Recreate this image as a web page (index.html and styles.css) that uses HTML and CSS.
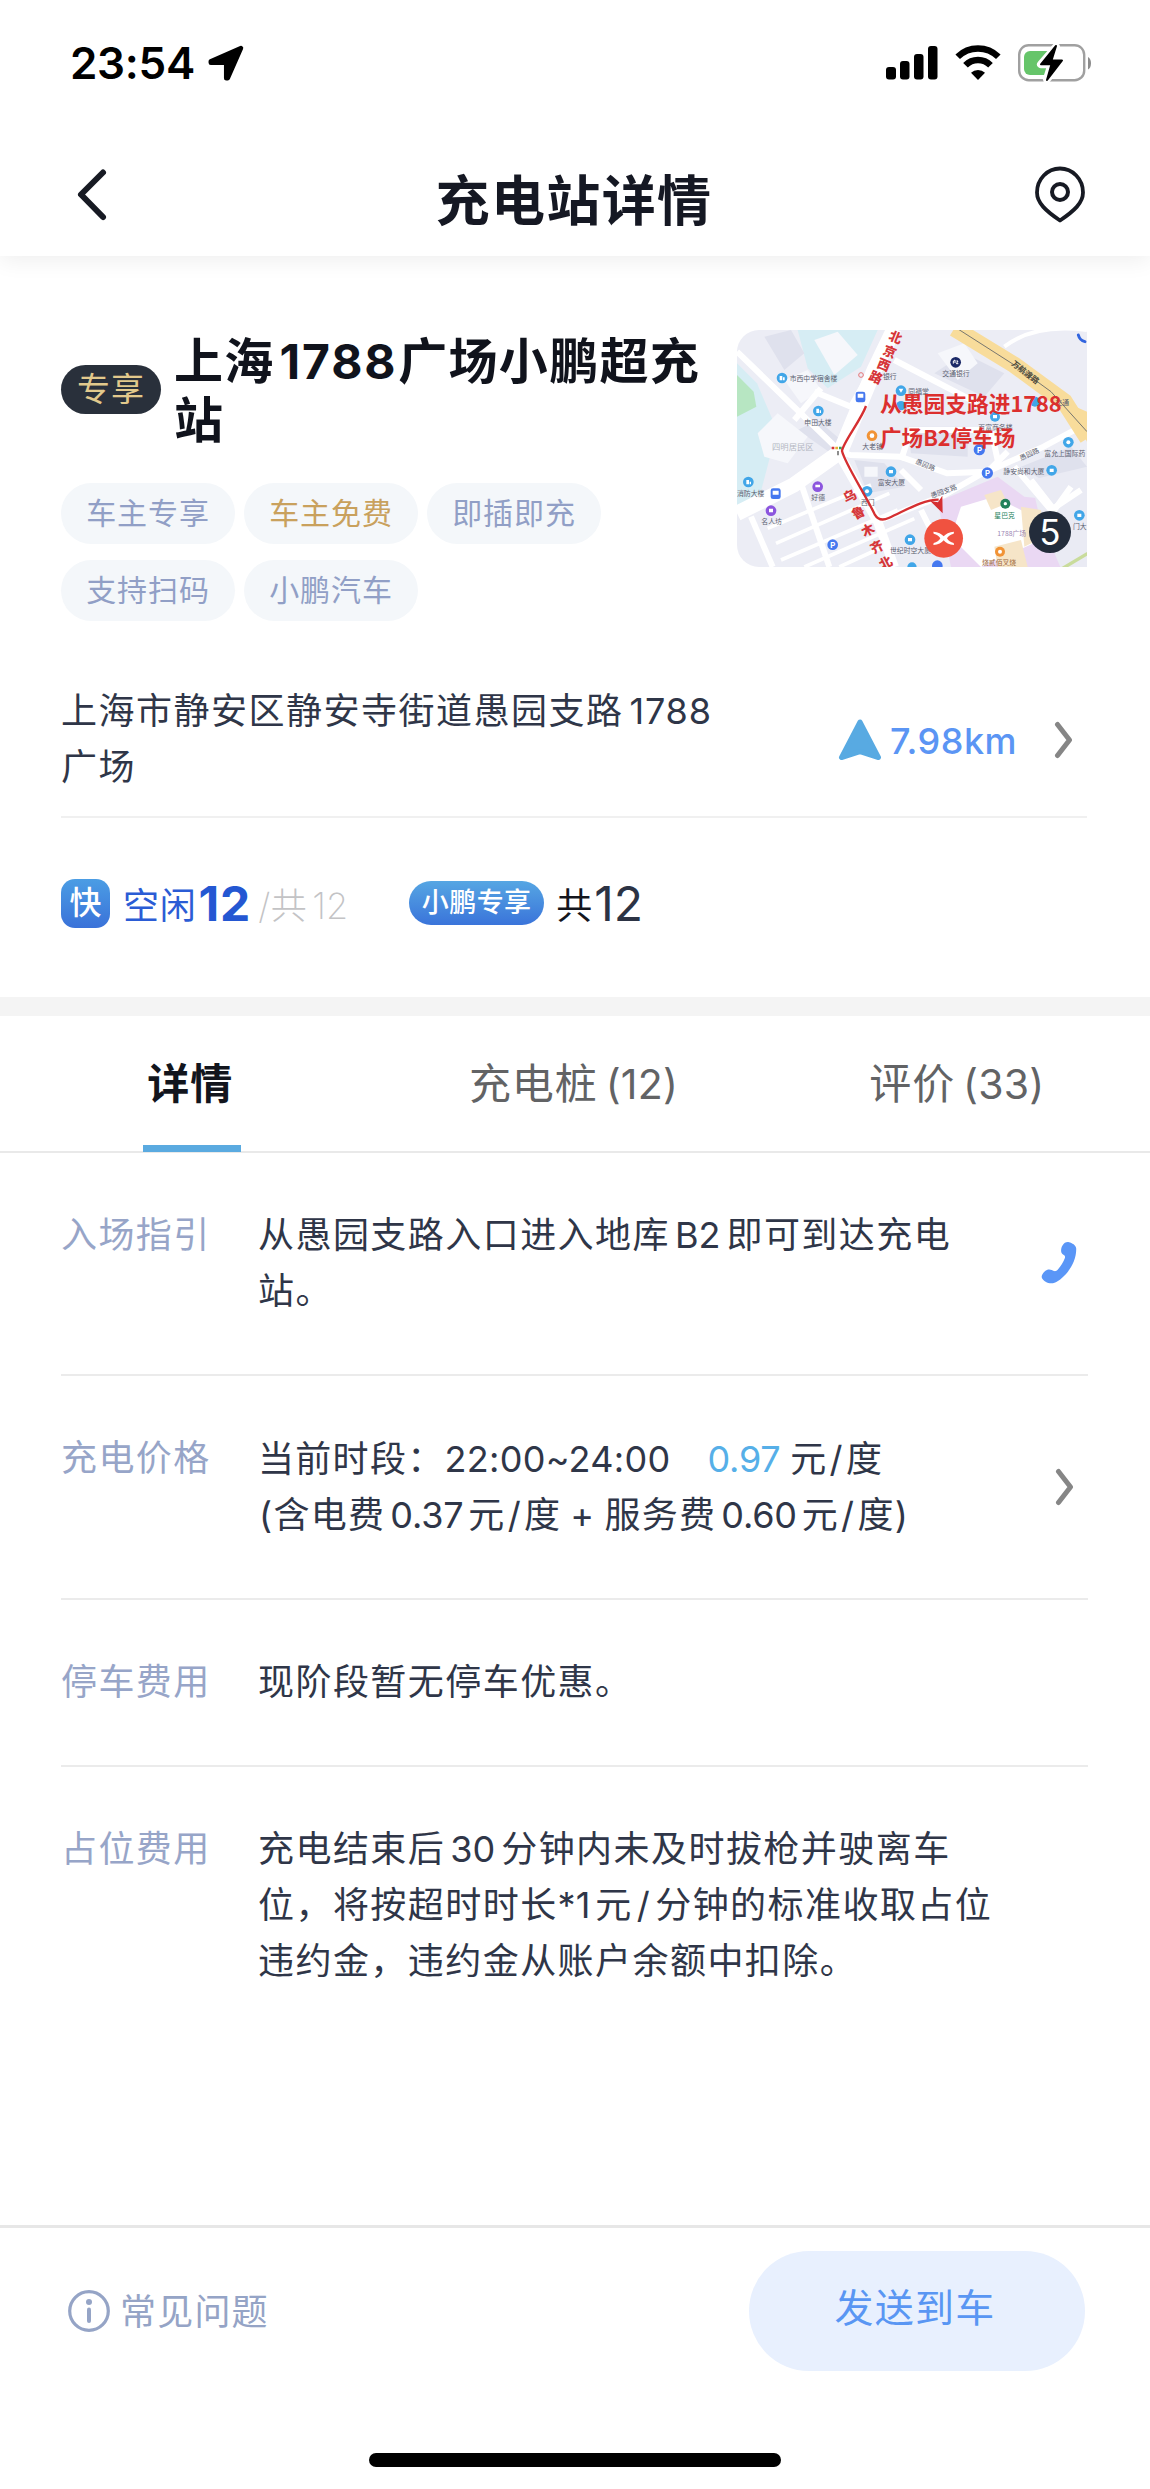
FILE: index.html
```html
<!DOCTYPE html>
<html lang="zh-CN">
<head>
<meta charset="utf-8">
<title>充电站详情</title>
<link rel="stylesheet" href="styles.css">
</head>
<body>
<div class="app">
  <header class="top">
    <div class="status">
      <div class="status-left">
        <span class="clock">23:54</span>
        <svg class="loc" width="36" height="36" viewBox="0 0 36 36"><path d="M33 3 2.800 16.200v1.600h15.400v15.400h1.600z" fill="#000" stroke="#000" stroke-width="4.500" stroke-linejoin="round"/></svg>
      </div>
      <div class="status-right">
        <svg width="52" height="34" viewBox="0 0 52 34"><rect x="0" y="21" width="10" height="12.500" rx="3"/><rect x="14" y="15" width="9.500" height="18.500" rx="3"/><rect x="28" y="8" width="9.500" height="25.500" rx="3"/><rect x="42" y="0" width="9.500" height="33.500" rx="3"/></svg>
        <svg class="wifi" width="46" height="36" viewBox="0 0 46 36"><g fill="none" stroke="#000" stroke-width="6.500"><path d="M2.700 11.800a29 29 0 0 1 40.600 0"/><path d="M10.500 20.200a17.500 17.500 0 0 1 25 0"/></g><path d="M23 35l-7-7.200a10 10 0 0 1 14 0z"/></svg>
        <svg class="battery" width="76" height="40" viewBox="0 0 76 40"><rect x="1.200" y="2.200" width="65" height="35" rx="9.500" fill="#fff" stroke="#a0a0a0" stroke-width="2.400"/><path d="M70 14c4 1.500 4 11 0 12.500z" fill="#8c8c8c"/><path d="M12 8h20v24H12a6 6 0 0 1-6-6V14a6 6 0 0 1 6-6z" fill="#66c56a"/><path d="M38 4 23 21.300h10.500L29 36 44 18.500H33.500z" fill="#000" stroke="#fff" stroke-width="8" stroke-linejoin="round"/><path d="M38 3 23 21.300h10.500L29 37 44 17.500H33.500z" fill="#000" stroke="#000" stroke-width="2" stroke-linejoin="round"/></svg>
      </div>
    </div>
    <div class="nav">
      <svg class="back" width="32" height="54" viewBox="0 0 32 54"><path d="M27 4.500 5 26.500 27 49" fill="none" stroke="#171a23" stroke-width="6" stroke-linecap="round" stroke-linejoin="round"/></svg>
      <h1>充电站详情</h1>
      <svg class="pin" width="52" height="58" viewBox="0 0 52 58"><path d="M26 54.500C12 45 3 37 3 26.500a23 24 0 0 1 46 0C49 37 40 45 26 54.500z" fill="none" stroke="#171a23" stroke-width="3.800" stroke-linejoin="round"/><circle cx="26" cy="26" r="8" fill="none" stroke="#171a23" stroke-width="4"/></svg>
    </div>
  </header>

  <section class="summary">
    <div class="hero">
      <div class="hero-text">
        <div class="name-row">
          <span class="vip">专享</span>
          <h2>上海<span class="n">1788</span>广场小鹏超充<br>站</h2>
        </div>
        <div class="tags">
          <span>车主专享</span><span class="gold">车主免费</span><span>即插即充</span><span>支持扫码</span><span>小鹏汽车</span>
        </div>
      </div>
      <div class="map">
        <svg width="350" height="237" viewBox="48 30 1050 711">
          <rect x="48" y="30" width="1050" height="711" fill="#ecedf5"/>
          <g fill="#d6edf4"><path d="M230 30h240l-50 110-100 65-60-60z"/><path d="M48 130l60 60 60 140-60 230-60 10z"/></g>
          <path d="M48 165l50 50 8 45-58 30z" fill="#b7e6c2"/>
          <g fill="#dfe1ed"><path d="M130 50l80-20 40 70-60 50z"/><path d="M230 330l60-30 70 60-30 40z"/><path d="M560 320h180v90l-170-10z"/><path d="M640 160l90-60 120 60-60 70z"/><path d="M400 420l90 10 60 70-110 20z"/><path d="M900 440l150-60 48 60v70l-120-20z"/></g>
          <g fill="#f6f7fb"><path d="M110 340l60-60 90 70-60 80-70-20z"/><path d="M280 60l70-25 60 70-70 60z"/><path d="M650 100l80-30 40 60-60 50z"/><path d="M190 180l70-30 40 60-60 40z"/><path d="M430 440h40v30h-40z"/></g>
          <path d="M650 545l180-75 80 60 188 20v191H690z" fill="#ead8f3"/>
          <path d="M930 480l168-40v301h-80l-60-140z" fill="#eaebf4"/>
          <path d="M720 560l100-30 120 60 20 70-180 81-90-90z" fill="#fff"/>
          <g fill="#f6e5c8"><path d="M790 525l50-15 20 40-50 20z"/><path d="M900 560l60 10 10 80-60 30z"/><path d="M820 680l80-20 20 81h-90z"/></g>
          <g fill="none" stroke="#fff" stroke-width="18"><path d="M48 95l310 300 30 10 150 5 140 50 120-5 170-75 130-70"/><path d="M48 580l170-85 140-100L460 150l60-125" stroke-width="46"/><path d="M350 395l120 210 50 136" stroke-width="28"/><path d="M240 490l85 251"/><path d="M90 590l65 151"/><path d="M480 600l190-75 140-80 50-50"/><path d="M280 215l110 45 45-80"/><path d="M220 300l80-95"/><path d="M520 120l250 130"/><path d="M830 420l-20-90h-240l-30 90"/><path d="M880 440l110 130 90-60M600 510l-60-60"/><path d="M930 480l70 90 50-70"/><path d="M600 570l30 60"/></g>
          <g stroke="#fff" stroke-width="11"><path d="M140 625l310-130M165 670l340-150M180 720l350-150M250 741l330-145M355 741l130-60"/></g>
          <path d="M700 25l180 110 150 110 70 110" fill="none" stroke="#f8dc9b" stroke-width="50"/>
          <path d="M1040 250l58 25v90z" fill="#f8dc9b"/>
          <path d="M700 20l180 115 110 80 108 120" fill="none" stroke="#77766f" stroke-width="3"/>
          <path d="M850 80q90-70 248-50" fill="none" stroke="#fff" stroke-width="12"/>
          <path d="M1000 760l100-60" stroke="#c9dc9c" stroke-width="10"/>
          <g class="poi">
            <g fill="#41a6e8"><circle cx="183" cy="174" r="16"/><circle cx="292" cy="273" r="16"/><circle cx="540" cy="212" r="16"/><circle cx="540" cy="257" r="14"/><circle cx="510" cy="455" r="16"/><circle cx="822" cy="290" r="15"/><circle cx="942" cy="245" r="15"/><circle cx="1042" cy="367" r="16"/><circle cx="992" cy="451" r="16"/><circle cx="82" cy="486" r="16"/><circle cx="438" cy="514" r="16"/><circle cx="567" cy="659" r="16"/><circle cx="1075" cy="586" r="16"/><circle cx="573" cy="741" r="14"/></g>
            <g fill="#4578ef"><rect x="404" y="215" width="29" height="32" rx="7"/><rect x="149" y="505" width="30" height="32" rx="7"/><circle cx="775" cy="389" r="17"/><circle cx="799" cy="459" r="17"/><circle cx="335" cy="674" r="16"/><circle cx="649" cy="737" r="16"/></g>
            <g fill="#8c55de"><circle cx="290" cy="500" r="16"/><circle cx="150" cy="572" r="16"/></g>
            <g fill="#f19336"><circle cx="453" cy="347" r="16"/><circle cx="837" cy="695" r="15"/></g>
            <circle cx="704" cy="127" r="16" fill="#1b2967"/><circle cx="853" cy="551" r="15" fill="#23815c"/>
            <g fill="#fff"><path d="M176 168h8v13h-8zM186 172h5v9h-5zM286 266h8v13h-8zM296 271h4v8h-4zM533 206h14l-7 12zM504 450h12v10h-12zM986 446h12v10h-12zM76 480h8v13h-8zM86 485h4v8h-4zM561 654h12v10h-12zM1069 581h12v10h-12zM816 285h12v10h-12zM283 494h14v8h-14zM144 566h12v11h-12zM410 221h17v12h-17zM155 512h18v12h-18z"/><circle cx="453" cy="347" r="7"/><circle cx="837" cy="695" r="6"/><circle cx="853" cy="551" r="5"/><circle cx="1042" cy="367" r="6"/><circle cx="438" cy="514" r="6"/></g>
            <path d="M697 131v-8l5-3v9M706 123h5l-5 8h6" fill="none" stroke="#fff" stroke-width="3"/>
            <g class="p"><text x="775" y="398">P</text><text x="799" y="468">P</text><text x="335" y="683">P</text></g>
          </g>
          <g class="lbl">
            <text x="206" y="183">市西中学宿舍楼</text><text x="250" y="316">申田大楼</text><text x="664" y="167">交通银行</text><text x="486" y="176">银行</text><text x="562" y="221">同福堂</text><text x="424" y="388">大老铺</text><text x="772" y="329">百富商务楼</text><text x="470" y="496">富安大厦</text><text x="271" y="541">好德</text><text x="48" y="527">消防大楼</text><text x="121" y="612">名人坊</text><text x="420" y="556">西门</text><text x="847" y="461">静安尚和大厦</text><text x="970" y="408">富允上国际药</text><text x="507" y="700">世纪时空大厦</text><text x="1056" y="628">门大</text><text x="1003" y="256">交通</text>
            <text x="820" y="593" fill="#23815c">星巴克</text><text x="783" y="734" fill="#9a6335">烧贰佰叉烧</text><text x="829" y="647" fill="#9c86b3">1788广场</text><text x="153" y="389" class="area">四明居民区</text>
            <text transform="translate(582 430) rotate(22)">愚园路</text><text transform="translate(632 535) rotate(-20)">愚园支路</text><text transform="translate(900 422) rotate(-25)">愚园路</text><text class="road" transform="translate(870 134) rotate(38)">万航渡路</text>
          </g>
          <path d="M1072 45c3 12 8 17 20 20" fill="none" stroke="#3265df" stroke-width="9" stroke-linecap="round"/>
          <circle cx="420" cy="165" r="7" fill="none" stroke="#e57476" stroke-width="3"/>
          <path d="M332 384h8" stroke="#d93434" stroke-width="8"/><path d="M343 384h8" stroke="#e5b02e" stroke-width="8"/><path d="M354 384h8" stroke="#37a55d" stroke-width="8"/><path d="M351 393v13" stroke="#555" stroke-width="4"/>
          <g class="redroad"><text transform="translate(500 58) rotate(22)">北</text><text transform="translate(483 101) rotate(22)">京</text><text transform="translate(465 140) rotate(22)">西</text><text transform="translate(441 177) rotate(24)">路</text><text transform="translate(375 550) rotate(-27)">乌</text><text transform="translate(401 599) rotate(-27)">鲁</text><text transform="translate(430 652) rotate(-27)">木</text><text transform="translate(457 703) rotate(-27)">齐</text><text transform="translate(483 750) rotate(-27)">北</text></g>
          <path d="M435 258C420 300 365 370 363 393c10 40 70 130 98 190q14 24 42 11c50-22 100-55 150-55" fill="none" stroke="#d52f31" stroke-width="7"/>
          <path d="M665 580l-38-38 24 5 13-20z" fill="#d52f31"/>
          <g class="guide"><text x="477" y="275" textLength="545" lengthAdjust="spacingAndGlyphs">从愚园支路进1788</text><text x="477" y="379" textLength="406" lengthAdjust="spacingAndGlyphs">广场B2停车场</text></g>
          <circle cx="668" cy="655" r="58" fill="#f05240"/>
          <path d="M637 635q22 2 31 14q9-12 31-14l-1 6q-14 3-20 14q6 11 20 14l1 6q-22-2-31-14q-9 12-31 14l1-6q14-3 20-14q-6-11-20-14z" fill="#fff"/>
        </svg>
        <span class="count">5</span>
      </div>
    </div>

    <div class="address">
      <p>上海市静安区静安寺街道愚园支路<span class="n">1788</span><br>广场</p>
      <div class="distance">
        <svg width="44" height="42" viewBox="0 0 44 42"><path d="M22 3 3.500 38.500 22 32.500l18.500 6z" fill="#58aae2" stroke="#58aae2" stroke-width="5" stroke-linejoin="round"/></svg>
        <span class="km">7.98km</span>
        <svg class="chev" width="20" height="38" viewBox="0 0 20 38"><path d="M3.500 3.500 15.500 19 3.500 34.500" fill="none" stroke="#868686" stroke-width="5" stroke-linecap="round" stroke-linejoin="round"/></svg>
      </div>
    </div>

    <div class="stock">
      <span class="fast">快</span><span class="free">空闲</span><b class="free-n">12</b><span class="total">/共<span class="tn">12</span></span>
      <span class="xp">小鹏专享</span><span class="gong">共</span><span class="gong-n">12</span>
    </div>
  </section>

  <nav class="tabs">
    <a class="on">详情</a>
    <a>充电桩<span class="n">(12)</span></a>
    <a>评价<span class="n">(33)</span></a>
  </nav>

  <main class="rows">
    <div class="row">
      <span class="label">入场指引</span>
      <p>从愚园支路入口进入地库<span class="n">B2</span>即可到达充电<br>站。</p>
      <svg class="phone" width="36" height="44" viewBox="0 0 36 44"><path d="M21.500 4.500C23 1.800 25.500.700 28 1.200c3 .7 7 2.800 7.200 6.300C35.700 22 24 37.500 13.500 41.800 8.500 43.700 2.700 40.500.900 37c-1-2.700 2-6.500 5-8 3-1.300 5 .2 7 1 1.500.5 2.800-.2 4-1.500 3-3.500 5.500-7.500 7-11.500.7-2-.8-3-2.500-4-2-1.500-1.500-6 .1-8.500z" fill="#5a96f7"/></svg>
    </div>
    <div class="row price">
      <span class="label">充电价格</span>
      <p>当前时段：<span class="time">22:00~24:00</span><span class="amount">0.97</span>元<span class="sl">/</span>度<br><span class="lp">(</span>含电费<span class="n">0.37</span>元<span class="sl">/</span>度<span class="plus">+</span>服务费<span class="n">0.60</span>元<span class="sl">/</span>度<span class="rp">)</span></p>
      <svg class="chev" width="20" height="38" viewBox="0 0 20 38"><path d="M3.500 3.500 15.500 19 3.500 34.500" fill="none" stroke="#868686" stroke-width="5" stroke-linecap="round" stroke-linejoin="round"/></svg>
    </div>
    <div class="row">
      <span class="label">停车费用</span>
      <p>现阶段暂无停车优惠。</p>
    </div>
    <div class="row">
      <span class="label">占位费用</span>
      <p>充电结束后<span class="n">30</span>分钟内未及时拔枪并驶离车<br>位，将按超时时长<span class="star">*1</span>元<span class="sl wide">/</span>分钟的标准收取占位<br>违约金，违约金从账户余额中扣除。</p>
    </div>
  </main>

  <footer class="bottom">
    <div class="actions">
      <div class="faq">
        <svg width="42" height="42" viewBox="0 0 42 42"><circle cx="21" cy="21" r="19.300" fill="none" stroke="#95a4c6" stroke-width="3.200"/><circle cx="21" cy="12" r="3" fill="#95a4c6"/><path d="M21 19.500v11.500" stroke="#95a4c6" stroke-width="4" stroke-linecap="round"/></svg>
        <span>常见问题</span>
      </div>
      <button class="send">发送到车</button>
    </div>
    <div class="home"></div>
  </footer>
</div>
</body>
</html>
```
FILE: styles.css
```css
* { box-sizing: border-box; margin: 0; padding: 0; }
body {
  background: #fff;
  font-family: Inter, "Noto Sans CJK SC", sans-serif;
  font-weight: 400;
  color: #2f3648;
}
svg { display: block; flex: none; }
.app { width: 1150px; height: 2489px; display: flex; flex-direction: column; overflow: hidden; }

/* status bar and title */
.top { height: 256px; flex: none; box-shadow: 0 4px 22px rgba(0, 0, 0, .07); }
.status { height: 126px; padding: 0 58px 0 70px; display: flex; justify-content: space-between; align-items: center; }
.status-left, .status-right { display: flex; align-items: center; }
.clock { font-size: 44px; font-weight: 600; line-height: 50px; color: #000; letter-spacing: -.3px; }
.loc { margin-left: 13px; }
.wifi { margin-left: 17px; }
.battery { margin-left: 17px; margin-right: -2px; }
.nav { height: 130px; padding: 0 64px 0 76px; display: flex; justify-content: space-between; align-items: flex-start; }
.back { margin-top: 42px; }
.pin { margin-top: 40px; }
.nav h1 { font-size: 54px; line-height: 70px; margin: 41px 0 0 6px; font-weight: 700; color: #151823; letter-spacing: 1.4px; }

/* station summary */
.summary { height: 741px; flex: none; padding: 74px 63px 0 61px; }
.hero { display: flex; justify-content: space-between; align-items: flex-start; height: 310px; }
.hero-text { width: 660px; }
.name-row { display: flex; align-items: center; height: 118px; }
.vip { width: 100px; height: 49px; margin-right: 13px; border-radius: 25px; background: #29303b; color: #e2c98c; font-size: 33px; line-height: 48px; text-align: center; letter-spacing: 1px; }
.name-row h2 { font-size: 49px; line-height: 59px; font-weight: 700; color: #10131c; letter-spacing: 1.3px; white-space: nowrap; padding-top: 4px; }
h2 .n { margin: 0 1px 0 5px; letter-spacing: 1.8px; font-size: 48px; }
.tags { display: flex; flex-wrap: wrap; gap: 16px 9px; margin-top: 35px; width: 560px; }
.tags span { width: 174px; height: 61px; border-radius: 31px; background: #f4f7fa; color: #919fc6; font-size: 30px; line-height: 61px; text-align: center; letter-spacing: .9px; }
.tags .gold { color: #c9a15d; }
.map { position: relative; width: 350px; height: 237px; border-radius: 22px 0 0 22px; overflow: hidden; }
.map text { font-family: "Noto Sans CJK SC", sans-serif; }
.lbl { font-size: 20.5px; fill: #5b6070; }
.lbl .area { font-size: 25px; fill: #b4b7c2; }
.lbl .road { font-size: 24px; fill: #4c4a3c; font-weight: 700; }
.p text { font-size: 24px; font-weight: 700; fill: #fff; text-anchor: middle; }
.redroad text { font-size: 39px; font-weight: 900; fill: #d63639; }
.guide text { font-size: 64px; font-weight: 700; fill: #dc2f2e; }
.count { position: absolute; left: 292px; top: 181px; width: 42px; height: 42px; border-radius: 50%; background: #232c3b; color: #fff; font-size: 35px; line-height: 42px; text-align: center; }

.address { height: 178px; padding-top: 43px; border-bottom: 2px solid #f0f0f0; display: flex; justify-content: space-between; }
.address p { font-size: 36px; line-height: 56px; letter-spacing: 1.5px; white-space: nowrap; }
.address .n { letter-spacing: .8px; margin-left: 6px; }
.n { letter-spacing: 0; margin: 0 6px 0 5px; }
.distance { display: flex; align-items: center; height: 116px; padding-right: 13px; }
.distance svg { position: relative; top: -1px; }
.km { font-size: 36px; font-weight: 500; color: #5b95f4; margin: 0 37px 0 8px; letter-spacing: .5px; }
.chev { flex: none; }

.stock { display: flex; align-items: center; height: 60px; margin-top: 55px; white-space: nowrap; }
.fast { width: 49px; height: 49px; border-radius: 14px; background: linear-gradient(#4b9de4, #3a72d9); color: #fff; font-size: 32px; font-weight: 500; line-height: 48px; text-align: center; }
.free { color: #2b5cd5; font-size: 36px; letter-spacing: .8px; margin-left: 13px; }
.free-n { color: #2457d2; font-size: 48px; font-weight: 700; margin-left: 2px; letter-spacing: .8px; }
.total { color: #c3c3c5; font-size: 36px; font-weight: 200; margin-left: 7px; letter-spacing: .5px; }
.tn { margin-left: 5px; letter-spacing: 0; }
.xp { width: 135px; height: 44px; margin-left: 61px; border-radius: 22px; background: linear-gradient(#56a6e3, #3a74da); color: #fff; font-size: 27px; font-weight: 500; line-height: 43px; text-align: center; letter-spacing: .4px; }
.gong { color: #14161d; font-size: 36px; margin-left: 12px; }
.gong-n { color: #2c3344; font-size: 48px; margin-left: 2px; letter-spacing: 0; }

/* tabs */
.tabs { height: 156px; flex: none; padding-top: 19px; background: linear-gradient(#f4f4f4 19px, #fff 19px); border-bottom: 2px solid #e9e9e9; display: grid; grid-template-columns: repeat(3, 1fr); }
.tabs a { position: relative; color: #626365; font-size: 42px; line-height: 136px; text-align: center; letter-spacing: .9px; padding-right: 3px; }
.tabs .on { color: #12151d; font-weight: 700; }
.tabs .on::after { content: ""; position: absolute; left: 143px; bottom: 0; width: 98px; height: 7px; background: #5aaae0; }
.tabs .n { margin: 0 0 0 8px; font-size: 41px; letter-spacing: .2px; }

/* detail rows */
.rows { flex: none; padding: 0 62px 0 61px; }
.row { display: flex; align-items: center; padding: 54px 0 55px; border-bottom: 2px solid #ebebeb; font-size: 36px; line-height: 56px; }
.row:last-child { border-bottom: 0; }
.label { align-self: flex-start; width: 197px; color: #97a5c8; letter-spacing: 1.4px; }
.row p { flex: 1; letter-spacing: 1.45px; white-space: nowrap; }
.phone { margin-right: 11px; }
.row .chev { margin-right: 13px; }
.price p { padding-top: 1px; letter-spacing: 1.3px; }
.price .n { letter-spacing: -.2px; margin-right: 5px; }
.time { letter-spacing: .3px; }
.amount { color: #56afe8; margin: 0 10px 0 37px; letter-spacing: -.3px; }
.sl { margin: 0 2px; }
.sl.wide { margin: 0 4px; }
.lp { margin-left: 1px; }
.plus { margin: 0 9px; }
.star { letter-spacing: 0; margin-right: 5px; }

/* footer */
.bottom { margin-top: auto; height: 264px; flex: none; border-top: 3px solid #e7e7e7; }
.actions { display: flex; justify-content: space-between; align-items: flex-start; padding: 23px 65px 0 68px; }
.faq { display: flex; align-items: center; height: 120px; gap: 10px; color: #95a4c6; font-size: 36px; letter-spacing: 1.2px; }
.faq span { padding-bottom: 4px; }
.send { width: 336px; height: 120px; border: 0; border-radius: 60px; background: #e8f0fe; color: #5996f3; font-family: inherit; font-size: 39px; letter-spacing: 1.3px; line-height: 112px; padding: 0 4px 6px 0; }
.home { width: 412px; height: 14px; border-radius: 7px; background: #000; margin: 82px auto 0; }
```
